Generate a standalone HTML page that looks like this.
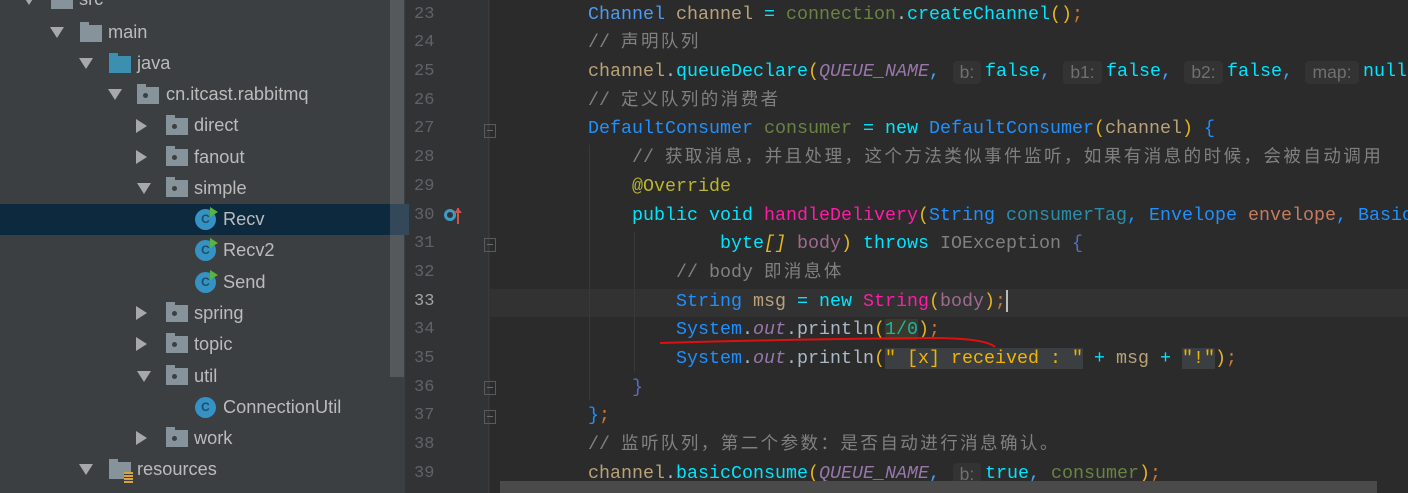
<!DOCTYPE html>
<html><head><meta charset="utf-8"><style>
*{margin:0;padding:0;box-sizing:border-box}
body{width:1408px;height:493px;overflow:hidden;background:#2b2b2b;position:relative;font-family:"Liberation Sans",sans-serif}
#tree{position:absolute;left:0;top:0;width:405px;height:493px;background:#3c3f41}
#vs{position:absolute;left:390px;top:0;width:14px;height:377px;background:#55595c}
.sel{position:absolute;left:0;top:204px;width:390px;height:31px;background:#0d293e}
.sel2{position:absolute;left:390px;top:204px;width:15px;height:31px;background:#33495a}
.row{position:absolute;height:31px;line-height:31px;font-size:18.2px;color:#bbbbbb;white-space:nowrap}
.arr{position:absolute;width:0;height:0}
.down{border-left:7px solid transparent;border-right:7px solid transparent;border-top:11px solid #a6a8aa}
.right{border-top:7px solid transparent;border-bottom:7px solid transparent;border-left:11px solid #a6a8aa}
.fold{position:absolute;width:22px;height:17px;background:#87939a;}
.fold:before{content:"";position:absolute;left:0;top:-3px;width:9px;height:4px;background:#87939a}
.fold.pk:after{content:"";position:absolute;left:6px;top:6px;width:5px;height:5px;border-radius:50%;background:#3c3f41}
.fold.blue,.fold.blue:before{background:#3d8fb0}
.cls{position:absolute;width:21px;height:21px;border-radius:50%;background:#3592c4;color:#1f4d66;font:bold 12px "Liberation Sans";text-align:center;line-height:21px}
.run{position:absolute;width:0;height:0;border-top:5px solid transparent;border-bottom:5px solid transparent;border-left:8px solid #59b33f}
#gut{position:absolute;left:405px;top:0;width:85px;height:493px;background:#313335}
.ln{position:absolute;left:405px;width:58px;text-align:left;padding-left:9px;font:17px "Liberation Mono",monospace;color:#606366;line-height:28.7px}
#cur{position:absolute;left:490px;top:289px;width:918px;height:28px;background:#323232}
.c{position:absolute;left:500px;height:28.7px;font:18.33px "Liberation Mono",monospace;line-height:28.7px;white-space:pre;color:#a9b7c6}
.cj{font-family:"Liberation Mono","Noto Sans CJK SC",monospace;font-size:17.5px;letter-spacing:2.45px}
.cm{color:#808080}.ty{color:#4b9bf0}.ty2{color:#1e90ff}.v{color:#b9a27a}.g{color:#6a8242}.cy{color:#00e5ff}.it{color:#9876aa;font-style:italic}
.p1{color:#e6b422}.sc{color:#cc7832}.an{color:#bbb529}.mg{color:#ff1aa8}.ct{color:#2a8ea8}.env{color:#c57b60}.bd{color:#9e6b8e}.st{color:#f0b400}.br{color:#5c6bc0}.ex{color:#808080}
.hint{display:inline-block;height:23px;line-height:23px;vertical-align:top;margin-top:3px;background:#333333;color:#707070;font-family:"Liberation Sans",sans-serif;font-size:17.5px;border-radius:4px;text-align:center;margin-right:4px}
.hl{background:#3b3f41}
#hs{position:absolute;left:500px;top:481px;width:877px;height:12px;background:#4a4a4a}
.fm{position:absolute;left:484px;width:12px;height:14px;border:1px solid #5a5a5a}
.fm:after{content:"";position:absolute;left:2px;top:5px;width:6px;height:1px;background:#6a6a6a}
</style></head><body>
<div id="tree">
<div class="sel"></div>
<div id="vs"></div><div class="sel2"></div>
<div class="arr down" style="left:22px;top:-6px"></div><div class="fold" style="left:51px;top:-8px"></div><div class="row" style="left:79px;top:-16px">src</div>
<div class="arr down" style="left:50px;top:27px"></div><div class="fold" style="left:80px;top:25px"></div><div class="row" style="left:108px;top:17px">main</div>
<div class="arr down" style="left:79px;top:58px"></div><div class="fold blue" style="left:109px;top:56px"></div><div class="row" style="left:137px;top:48px">java</div>
<div class="arr down" style="left:108px;top:89px"></div><div class="fold pk" style="left:137px;top:87px"></div><div class="row" style="left:166px;top:79px">cn.itcast.rabbitmq</div>
<div class="arr right" style="left:136px;top:119px"></div><div class="fold pk" style="left:166px;top:118px"></div><div class="row" style="left:194px;top:110px">direct</div>
<div class="arr right" style="left:136px;top:150px"></div><div class="fold pk" style="left:166px;top:149px"></div><div class="row" style="left:194px;top:142px">fanout</div>
<div class="arr down" style="left:137px;top:183px"></div><div class="fold pk" style="left:166px;top:180px"></div><div class="row" style="left:194px;top:173px">simple</div>
<div class="cls" style="left:195px;top:209px">C</div><div class="run" style="left:210px;top:207px"></div><div class="row" style="left:223px;top:204px">Recv</div>
<div class="cls" style="left:195px;top:240px">C</div><div class="run" style="left:210px;top:238px"></div><div class="row" style="left:223px;top:235px">Recv2</div>
<div class="cls" style="left:195px;top:272px">C</div><div class="run" style="left:210px;top:270px"></div><div class="row" style="left:223px;top:267px">Send</div>
<div class="arr right" style="left:136px;top:306px"></div><div class="fold pk" style="left:166px;top:305px"></div><div class="row" style="left:194px;top:298px">spring</div>
<div class="arr right" style="left:136px;top:337px"></div><div class="fold pk" style="left:166px;top:336px"></div><div class="row" style="left:194px;top:329px">topic</div>
<div class="arr down" style="left:137px;top:371px"></div><div class="fold pk" style="left:166px;top:368px"></div><div class="row" style="left:194px;top:361px">util</div>
<div class="cls" style="left:195px;top:397px">C</div><div class="row" style="left:223px;top:392px">ConnectionUtil</div>
<div class="arr right" style="left:136px;top:431px"></div><div class="fold pk" style="left:166px;top:430px"></div><div class="row" style="left:194px;top:423px">work</div>
<div class="arr down" style="left:79px;top:464px"></div><div class="fold" style="left:109px;top:462px"></div><div style="position:absolute;left:124px;top:472px;width:9px;height:11px;background:repeating-linear-gradient(#d9a33a 0 2px,#3c3f41 2px 3px)"></div><div class="row" style="left:137px;top:454px">resources</div>
</div>
<div id="gut"></div>
<div style="position:absolute;left:488px;top:0;width:1px;height:493px;background:#3a3a3a"></div>
<div id="cur"></div>
<div style="position:absolute;left:405px;top:204px;width:4px;height:31px;background:#33495a"></div>
<div class="ln" style="top:0.6px">23</div><div class="ln" style="top:29.3px">24</div><div class="ln" style="top:58px">25</div><div class="ln" style="top:86.7px">26</div><div class="ln" style="top:115.4px">27</div><div class="ln" style="top:144.1px">28</div><div class="ln" style="top:172.8px">29</div><div class="ln" style="top:201.5px">30</div><div class="ln" style="top:230.2px">31</div><div class="ln" style="top:258.9px">32</div><div class="ln" style="top:287.6px;color:#a4a3a3">33</div><div class="ln" style="top:316.3px">34</div><div class="ln" style="top:345px">35</div><div class="ln" style="top:373.7px">36</div><div class="ln" style="top:402.4px">37</div><div class="ln" style="top:431.1px">38</div><div class="ln" style="top:459.8px">39</div>
<div style="position:absolute;left:444px;top:209px;width:12px;height:12px;border-radius:50%;border:3px solid #3d9bc4"></div>
<div style="position:absolute;left:457px;top:208px;width:2px;height:16px;background:#d0504a"></div>
<div style="position:absolute;left:454px;top:208px;width:0;height:0;border-left:4px solid transparent;border-right:4px solid transparent;border-bottom:5px solid #d0504a"></div>
<div class="fm" style="top:124px"></div>
<div class="fm" style="top:238px"></div>
<div class="fm" style="top:381px"></div>
<div class="fm" style="top:410px"></div>
<div style="position:absolute;left:589px;top:145px;width:1px;height:255px;background:#393939"></div>
<div style="position:absolute;left:634px;top:232px;width:1px;height:140px;background:#393939"></div>
<div class="c" style="top:0.6px">        <span class="ty">Channel</span> <span class="v">channel</span> <span class="cy">=</span> <span class="g">connection</span>.<span class="cy">createChannel</span><span class="p1">()</span><span class="sc">;</span></div>
<div class="c cm" style="top:29.3px">        // <span class="cj">声明队列</span></div>
<div class="c" style="top:58px">        <span class="v">channel</span>.<span class="cy">queueDeclare</span><span class="p1">(</span><span class="it">QUEUE_NAME</span><span class="ty">,</span><span class="hint" style="width:28px;margin-left:13px">b:</span><span class="cy">false</span><span class="ty">,</span><span class="hint" style="width:39px;margin-left:12px">b1:</span><span class="cy">false</span><span class="ty">,</span><span class="hint" style="width:39px;margin-left:12px">b2:</span><span class="cy">false</span><span class="ty">,</span><span class="hint" style="width:54px;margin-left:12px">map:</span><span class="cy">null</span></div>
<div class="c cm" style="top:86.7px">        // <span class="cj">定义队列的消费者</span></div>
<div class="c" style="top:115.4px">        <span class="ty2">DefaultConsumer</span> <span class="g">consumer</span> <span class="cy">= new</span> <span class="ty2">DefaultConsumer</span><span class="p1">(</span><span class="v">channel</span><span class="p1">)</span> <span class="ty2">{</span></div>
<div class="c cm" style="top:144.1px">            // <span class="cj">获取消息，并且处理，这个方法类似事件监听，如果有消息的时候，会被自动调用</span></div>
<div class="c an" style="top:172.8px">            @Override</div>
<div class="c" style="top:201.5px">            <span class="cy">public void</span> <span class="mg">handleDelivery</span><span class="p1">(</span><span class="ty2">String</span> <span class="ct">consumerTag</span><span class="ty2">,</span> <span class="ty2">Envelope</span> <span class="env">envelope</span><span class="ty2">,</span> <span class="ty2">Basic</span></div>
<div class="c" style="top:230.2px">                    <span class="cy">byte</span><span class="p1" style="font-style:italic">[]</span> <span class="bd">body</span><span class="p1">)</span> <span class="cy">throws</span> <span class="ex">IOException</span> <span class="br">{</span></div>
<div class="c cm" style="top:258.9px">                // body <span class="cj">即消息体</span></div>
<div class="c" style="top:287.6px">                <span class="ty2">String</span> <span class="v">msg</span> <span class="cy">= new</span> <span class="mg">String</span><span class="p1">(</span><span class="bd">body</span><span class="p1">)</span><span class="sc">;</span><span style="display:inline-block;width:2px;height:22px;background:#bbb;vertical-align:middle"></span></div>
<div class="c" style="top:316.3px">                <span class="ty2">System</span>.<span class="it">out</span>.println<span class="p1">(</span><span style="background:#3b3a2a;color:#1bb5a5">1/0</span><span class="p1">)</span><span class="sc">;</span></div>
<div class="c" style="top:345px">                <span class="ty2">System</span>.<span class="it">out</span>.println<span class="p1">(</span><span class="hl"><span class="st">" [x] received : "</span></span> <span class="cy">+</span> <span class="v">msg</span> <span class="cy">+</span> <span class="hl"><span class="st">"!"</span></span><span class="p1">)</span><span class="sc">;</span></div>
<div class="c br" style="top:373.7px">            }</div>
<div class="c" style="top:402.4px">        <span class="ty2">}</span><span class="sc">;</span></div>
<div class="c cm" style="top:431.1px">        // <span class="cj">监听队列，第二个参数：是否自动进行消息确认。</span></div>
<div class="c" style="top:459.8px">        <span class="v">channel</span>.<span class="cy">basicConsume</span><span class="p1">(</span><span class="it">QUEUE_NAME</span><span class="ty">,</span><span class="hint" style="width:28px;margin-left:13px">b:</span><span class="cy">true</span><span class="ty">,</span> <span class="g">consumer</span><span class="p1">)</span><span class="sc">;</span></div>
<svg style="position:absolute;left:0;top:0" width="1408" height="493"><path d="M660 343 Q800 339 930 338 Q985 338 995 347" stroke="#e01010" stroke-width="2" fill="none"/></svg>
<div id="hs"></div>
</body></html>
